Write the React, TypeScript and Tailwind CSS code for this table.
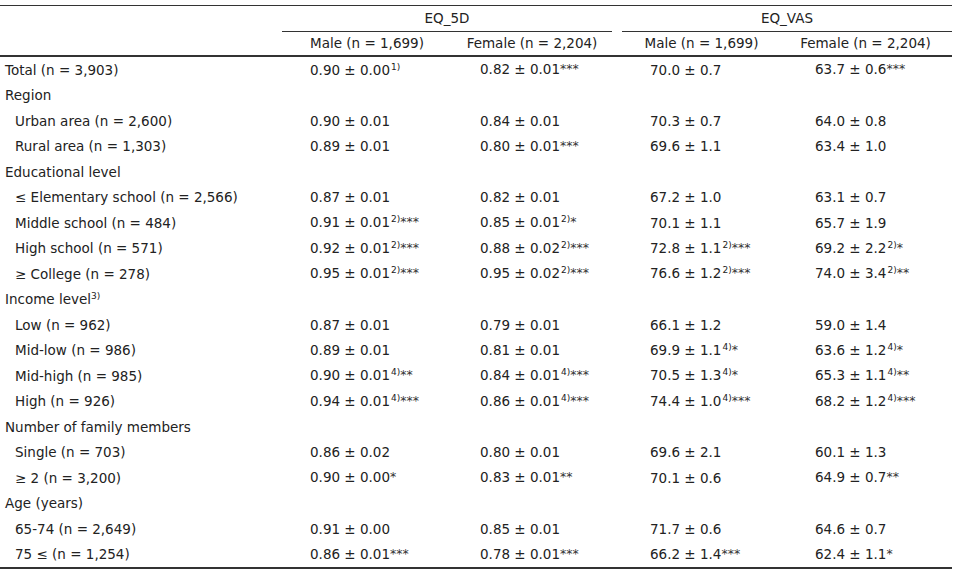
import type { ReactNode } from 'react';

type Cell = [string, string?, string?]; // value, footnote mark, stars

interface Row {
  label: ReactNode;
  indent?: boolean;
  cells?: Cell[];
}

const ROWS: Row[] = [
  { label: 'Total (n = 3,903)', cells: [['0.90 ± 0.00', '1)'], ['0.82 ± 0.01', '', '***'], ['70.0 ± 0.7'], ['63.7 ± 0.6', '', '***']] },
  { label: 'Region' },
  { label: 'Urban area (n = 2,600)', indent: true, cells: [['0.90 ± 0.01'], ['0.84 ± 0.01'], ['70.3 ± 0.7'], ['64.0 ± 0.8']] },
  { label: 'Rural area (n = 1,303)', indent: true, cells: [['0.89 ± 0.01'], ['0.80 ± 0.01', '', '***'], ['69.6 ± 1.1'], ['63.4 ± 1.0']] },
  { label: 'Educational level' },
  { label: '≤ Elementary school (n = 2,566)', indent: true, cells: [['0.87 ± 0.01'], ['0.82 ± 0.01'], ['67.2 ± 1.0'], ['63.1 ± 0.7']] },
  { label: 'Middle school (n = 484)', indent: true, cells: [['0.91 ± 0.01', '2)', '***'], ['0.85 ± 0.01', '2)', '*'], ['70.1 ± 1.1'], ['65.7 ± 1.9']] },
  { label: 'High school (n = 571)', indent: true, cells: [['0.92 ± 0.01', '2)', '***'], ['0.88 ± 0.02', '2)', '***'], ['72.8 ± 1.1', '2)', '***'], ['69.2 ± 2.2', '2)', '*']] },
  { label: '≥ College (n = 278)', indent: true, cells: [['0.95 ± 0.01', '2)', '***'], ['0.95 ± 0.02', '2)', '***'], ['76.6 ± 1.2', '2)', '***'], ['74.0 ± 3.4', '2)', '**']] },
  { label: <>Income level<sup className="text-[9px] -top-[5px]">3)</sup></> },
  { label: 'Low (n = 962)', indent: true, cells: [['0.87 ± 0.01'], ['0.79 ± 0.01'], ['66.1 ± 1.2'], ['59.0 ± 1.4']] },
  { label: 'Mid-low (n = 986)', indent: true, cells: [['0.89 ± 0.01'], ['0.81 ± 0.01'], ['69.9 ± 1.1', '4)', '*'], ['63.6 ± 1.2', '4)', '*']] },
  { label: 'Mid-high (n = 985)', indent: true, cells: [['0.90 ± 0.01', '4)', '**'], ['0.84 ± 0.01', '4)', '***'], ['70.5 ± 1.3', '4)', '*'], ['65.3 ± 1.1', '4)', '**']] },
  { label: 'High (n = 926)', indent: true, cells: [['0.94 ± 0.01', '4)', '***'], ['0.86 ± 0.01', '4)', '***'], ['74.4 ± 1.0', '4)', '***'], ['68.2 ± 1.2', '4)', '***']] },
  { label: 'Number of family members' },
  { label: 'Single (n = 703)', indent: true, cells: [['0.86 ± 0.02'], ['0.80 ± 0.01'], ['69.6 ± 2.1'], ['60.1 ± 1.3']] },
  { label: '≥ 2 (n = 3,200)', indent: true, cells: [['0.90 ± 0.00', '', '*'], ['0.83 ± 0.01', '', '**'], ['70.1 ± 0.6'], ['64.9 ± 0.7', '', '**']] },
  { label: 'Age (years)' },
  { label: '65-74 (n = 2,649)', indent: true, cells: [['0.91 ± 0.00'], ['0.85 ± 0.01'], ['71.7 ± 0.6'], ['64.6 ± 0.7']] },
  { label: '75 ≤ (n = 1,254)', indent: true, cells: [['0.86 ± 0.01', '', '***'], ['0.78 ± 0.01', '', '***'], ['66.2 ± 1.4', '', '***'], ['62.4 ± 1.1', '', '*']] },
];

const GRID = 'grid grid-cols-[282px_170px_170px_165px_165px]';

function Value({ cell }: { cell: Cell }) {
  const [v, mark, stars] = cell;
  return (
    <span className="whitespace-nowrap">
      {v}
      {mark && <sup className="text-[9px] -top-[5px] ml-[1px]">{mark}</sup>}
      {stars && <span className="text-[12.5px] relative -top-[1px] text-[#333]">{stars}</span>}
    </span>
  );
}

export default function App() {
  return (
    <div className="w-[954px] h-[573px] bg-white text-[#222] text-[13.5px] pt-[5px]" style={{ fontFamily: '"DejaVu Sans", Verdana, sans-serif' }}>
      <div className="w-[952px] border-t border-[#333]">
        {/* header */}
        <div className={`${GRID} h-[26px]`}>
          <div />
          <div className="col-span-2 mr-[10px] flex items-center justify-center border-b border-[#333]">EQ_5D</div>
          <div className="col-span-2 flex items-center justify-center border-b border-[#333]">EQ_VAS</div>
        </div>
        <div className={`${GRID} h-[25px] items-center border-b-2 border-[#333]`}>
          <div />
          <div className="text-center">Male (n = 1,699)</div>
          <div className="text-center pr-[10px]">Female (n = 2,204)</div>
          <div className="text-center pr-[6px]">Male (n = 1,699)</div>
          <div className="text-center pr-[8px]">Female (n = 2,204)</div>
        </div>

        {/* body */}
        <div className="border-b-2 border-[#333]">
          {ROWS.map((r, i) => (
            <div key={i} className={`${GRID} h-[25.5px] items-center`}>
              <div className={r.indent ? 'pl-[15px]' : 'pl-[5px]'}>{r.label}</div>
              {r.cells?.map((c, j) => (
                <div key={j} className="pl-[28px]">
                  <Value cell={c} />
                </div>
              ))}
            </div>
          ))}
        </div>
      </div>
    </div>
  );
}
